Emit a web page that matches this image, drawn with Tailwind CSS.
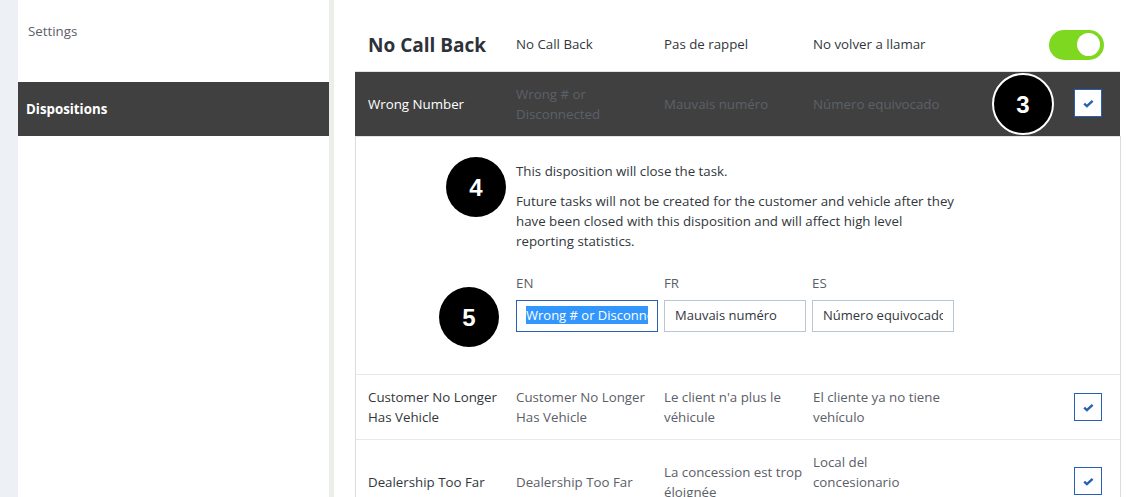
<!DOCTYPE html>
<html lang="en">
<head>
  <meta charset="UTF-8" />
  <title>Dispositions</title>
  <script src="https://cdn.jsdelivr.net/npm/@tailwindcss/browser@4"></script>
</head>
<body class="bg-white text-[13.3px] text-[#32373c] font-['Open_Sans',sans-serif] overflow-hidden">
  <div class="relative flex h-[497px] w-[1135px] overflow-hidden">
    <!-- left strip -->
    <div class="w-[18px] shrink-0 bg-[#edf1f5]"></div>

    <!-- settings nav -->
    <aside class="w-[311px] shrink-0">
      <div class="h-[82px] pl-[10px] pt-[21px] leading-5 text-[#5b6068]">Settings</div>
      <div class="flex h-[54px] items-center bg-[#404040] pl-[8px] pt-[2px] font-bold text-white">Dispositions</div>
    </aside>
    <div class="w-[5px] shrink-0 bg-[#eceee8]"></div>

    <!-- dispositions table -->
    <main class="ml-[21px] w-[766px] shrink-0">
      <div class="flex h-[71px] items-center pt-[18px]">
        <div class="w-[161px] pl-[13px] pt-[2px] text-[19px] font-bold text-[#2e3238]">No Call Back</div>
        <div class="w-[148px]">No Call Back</div>
        <div class="w-[149px]">Pas de rappel</div>
        <div class="w-[236px]">No volver a llamar</div>
        <div class="flex h-[30px] w-[55px] items-center justify-end rounded-full bg-[#7ed81f] pr-[4px]">
          <div class="size-[23px] rounded-full bg-white"></div>
        </div>
      </div>

      <div class="mr-px flex h-[65px] items-center border-t border-[#e3e3e3] bg-[#404040]">
        <div class="w-[161px] pl-[13px] pt-[2px] text-white">Wrong Number</div>
        <div class="w-[148px] pr-[20px] leading-5 text-[#5c6068]">Wrong # or Disconnected</div>
        <div class="w-[149px] pt-[2px] text-[#5c6068]">Mauvais numéro</div>
        <div class="w-[261px] pt-[2px] text-[#5c6068]">Número equivocado</div>
        <div class="mb-[2px] flex size-[28px] items-center justify-center border border-[#2a5fb8] bg-white">
          <svg width="11" height="9" viewBox="0 0 11 9"><path d="M1.2 4.6l2.7 2.5L9.6 1.8" fill="none" stroke="#2a5fb8" stroke-width="2.4"/></svg>
        </div>
      </div>

      <div class="h-[239px] border-x border-t border-b border-x-[#dcdce0] border-t-[#e3e3e3] border-b-[#e8e8e4] pl-[160px] pt-[24px]">
        <p class="leading-5">This disposition will close the task.</p>
        <p class="mt-[10px] w-[445px] leading-5">Future tasks will not be created for the customer and vehicle after they have been closed with this disposition and will affect high level reporting statistics.</p>
        <div class="mt-[22px] flex gap-[6px]">
          <div class="w-[142px]">
            <div class="leading-5 text-[#5b6068]">EN</div>
            <div class="mt-[7px] flex h-[32px] items-center overflow-hidden border border-[#2a5fb8] px-[9px] text-[13px]">
              <div class="w-full overflow-hidden whitespace-nowrap"><span class="bg-[#3297fd] text-white">Wrong # or Disconnected</span></div>
            </div>
          </div>
          <div class="w-[142px]">
            <div class="leading-5 text-[#5b6068]">FR</div>
            <div class="mt-[7px] flex h-[32px] items-center overflow-hidden border border-[#b8c7d3] px-[10px] text-[13px] whitespace-nowrap">Mauvais numéro</div>
          </div>
          <div class="w-[142px]">
            <div class="leading-5 text-[#5b6068]">ES</div>
            <div class="mt-[7px] flex h-[32px] items-center border border-[#b8c7d3] px-[10px] text-[13px]">
              <div class="w-full overflow-hidden whitespace-nowrap">Número equivocado</div>
            </div>
          </div>
        </div>
      </div>

      <div class="flex h-[65px] items-center border-x border-b border-x-[#dcdce0] border-b-[#e8e8e4]">
        <div class="w-[160px] pl-[12px] pr-[8px] leading-5">Customer No Longer Has Vehicle</div>
        <div class="w-[148px] pr-[8px] leading-5 text-[#5b6068]">Customer No Longer Has Vehicle</div>
        <div class="w-[149px] pr-[16px] leading-5 text-[#5b6068]">Le client n'a plus le véhicule</div>
        <div class="w-[261px] pr-[120px] leading-5 text-[#5b6068]">El cliente ya no tiene vehículo</div>
        <div class="flex size-[28px] items-center justify-center border border-[#2a5fb8] bg-white">
          <svg width="11" height="9" viewBox="0 0 11 9"><path d="M1.2 4.6l2.7 2.5L9.6 1.8" fill="none" stroke="#2a5fb8" stroke-width="2.4"/></svg>
        </div>
      </div>

      <div class="flex h-[85px] items-start border-x border-x-[#dcdce0] pt-[12px]">
        <div class="w-[160px] pl-[12px] pt-[20px] leading-5">Dealership Too Far</div>
        <div class="w-[148px] pt-[20px] leading-5 text-[#5b6068]">Dealership Too Far</div>
        <div class="w-[149px] pt-[10px] leading-5 text-[#5b6068]">La concession est trop éloignée</div>
        <div class="w-[261px] pr-[120px] leading-5 text-[#5b6068]">Local del concesionario</div>
        <div class="mt-[15px] flex size-[28px] items-center justify-center border border-[#2a5fb8] bg-white">
          <svg width="11" height="9" viewBox="0 0 11 9"><path d="M1.2 4.6l2.7 2.5L9.6 1.8" fill="none" stroke="#2a5fb8" stroke-width="2.4"/></svg>
        </div>
      </div>
    </main>

    <!-- callout badges -->
    <div class="absolute left-[992px] top-[73px] flex size-[62px] items-center justify-center rounded-full border-2 border-white bg-black pt-[2px] font-['Liberation_Sans',sans-serif] text-[24px] font-bold text-white">3</div>
    <div class="absolute left-[446px] top-[157px] flex size-[60px] items-center justify-center rounded-full bg-black pt-[2px] font-['Liberation_Sans',sans-serif] text-[24px] font-bold text-white">4</div>
    <div class="absolute left-[439px] top-[287px] flex size-[60px] items-center justify-center rounded-full bg-black pt-[2px] font-['Liberation_Sans',sans-serif] text-[24px] font-bold text-white">5</div>
  </div>
</body>
</html>
